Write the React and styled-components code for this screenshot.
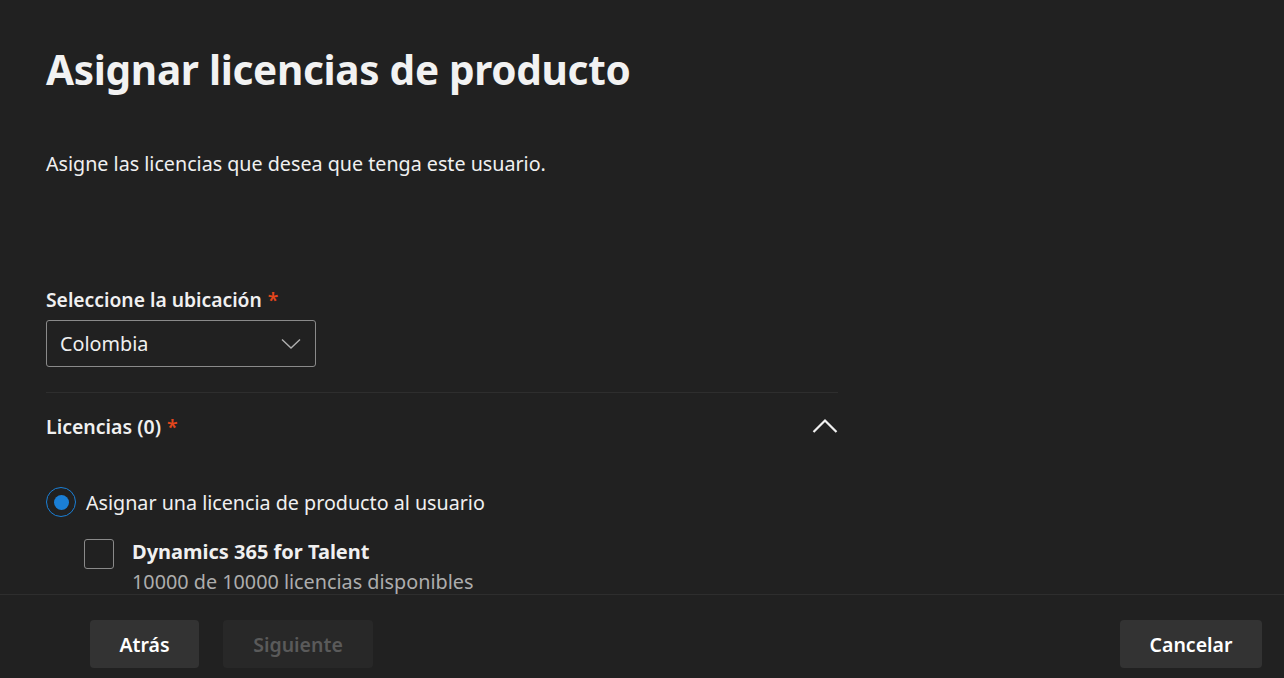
import React, { useState } from "react";
import styled, { createGlobalStyle } from "styled-components";

const GlobalStyle = createGlobalStyle`
  html, body {
    margin: 0;
    padding: 0;
    background: #212121;
  }
  body {
    font-family: "Noto Sans", "Open Sans", sans-serif;
    color: #f0f0f0;
  }
`

const Page = styled.div`
  height: 100vh;
  display: flex;
  flex-direction: column;
  overflow: hidden;
`
const Content = styled.div`
  flex: 1;
  overflow: hidden;
  padding: 42px 46px 0 46px;
`
const Title = styled.h1`
  margin: 0;
  font-size: 40.5px;
  line-height: 56px;
  font-weight: 700;
  color: #f2f2f2;
  letter-spacing: -0.3px;
`
const Description = styled.p`
  margin: 52px 0 0 0;
  font-size: 19.7px;
  line-height: 28px;
  color: #f0f0f0;
`
const Label = styled.div`
  margin-top: 108px;
  font-size: 19.3px;
  line-height: 28px;
  font-weight: 600;
  color: #f0f0f0;
`
const Required = styled.span`
  color: #e3461c;
  margin-left: 6px;
  font-weight: 600;
`
const Select = styled.div`
  margin-top: 6px;
  width: 270px;
  height: 47px;
  box-sizing: border-box;
  border: 1px solid #8a8a8a;
  border-radius: 3px;
  display: flex;
  align-items: center;
  justify-content: space-between;
  padding: 0 14px 0 13px;
  font-size: 19.8px;
  color: #f0f0f0;
`
const Divider = styled.div`
  margin-top: 25px;
  width: 792px;
  height: 1px;
  background: #2e2e2e;
`
const SectionHeader = styled.div`
  width: 792px;
  height: 66px;
  display: flex;
  align-items: center;
  justify-content: space-between;
`
const SectionTitle = styled.div`
  font-size: 19.5px;
  font-weight: 600;
  color: #f0f0f0;
`
const ChevronButton = styled.div`
  display: flex;
  align-items: center;
  cursor: pointer;
`
const RadioRow = styled.label`
  margin-top: 28px;
  display: flex;
  align-items: center;
  gap: 10px;
  font-size: 19.7px;
  color: #f0f0f0;
  cursor: pointer;
`
const RadioCircle = styled.span`
  width: 30px;
  height: 30px;
  box-sizing: border-box;
  border-radius: 50%;
  border: 1.5px solid ${p => (p.checked ? "#1a7fd6" : "#8a8a8a")};
  display: flex;
  align-items: center;
  justify-content: center;
  &::after {
    content: "";
    width: 15px;
    height: 15px;
    border-radius: 50%;
    background: ${p => (p.checked ? "#1a7fd6" : "transparent")};
  }
`
const LicenseRow = styled.div`
  margin-top: 20px;
  margin-left: 38px;
  display: flex;
  gap: 18px;
`
const CheckBox = styled.span`
  width: 30px;
  height: 30px;
  box-sizing: border-box;
  border: 1px solid #8a8a8a;
  border-radius: 3px;
  flex-shrink: 0;
  margin-top: 2px;
`
const LicenseText = styled.div`
  display: flex;
  flex-direction: column;
`
const LicenseName = styled.div`
  font-size: 20px;
  line-height: 30px;
  font-weight: 700;
  color: #f0f0f0;
`
const LicenseCount = styled.div`
  font-size: 19.8px;
  line-height: 30px;
  color: #adadad;
`
const Footer = styled.div`
  height: 84px;
  box-sizing: border-box;
  border-top: 1px solid #2e2e2e;
  display: flex;
  align-items: flex-start;
  padding: 25px 22px 0 90px;
  gap: 24px;
`
const Button = styled.button`
  height: 48px;
  min-width: ${p => p.width}px;
  border: none;
  border-radius: 4px;
  background: ${p => (p.disabled ? "#282828" : "#333333")};
  color: ${p => (p.disabled ? "#5a5a5a" : "#ffffff")};
  font-family: inherit;
  font-size: 19.5px;
  font-weight: 600;
  padding: 0 20px;
  cursor: ${p => (p.disabled ? "default" : "pointer")};
  margin-left: ${p => (p.push ? "auto" : "0")};
`

const ChevronDown = () => (
  <svg width="20" height="12" viewBox="0 0 20 12">
    <path d="M1 1.5 L10 10 L19 1.5" fill="none" stroke="#b0b0b0" strokeWidth="1.4" />
  </svg>
)

const ChevronUp = () => (
  <svg width="26" height="16" viewBox="0 0 26 16">
    <path d="M1.5 14 L13 2.5 L24.5 14" fill="none" stroke="#f0f0f0" strokeWidth="2.2" />
  </svg>
)

const App = () => {
  const [checked, setChecked] = useState(true);

  return (
    <Page>
      <GlobalStyle />
      <Content>
        <Title>Asignar licencias de producto</Title>
        <Description>Asigne las licencias que desea que tenga este usuario.</Description>
        <Label>
          Seleccione la ubicación<Required>*</Required>
        </Label>
        <Select>
          <span>Colombia</span>
          <ChevronDown />
        </Select>
        <Divider />
        <SectionHeader>
          <SectionTitle>
            Licencias (0)<Required>*</Required>
          </SectionTitle>
          <ChevronButton>
            <ChevronUp />
          </ChevronButton>
        </SectionHeader>
        <RadioRow onClick={() => setChecked(true)}>
          <RadioCircle checked={checked} />
          Asignar una licencia de producto al usuario
        </RadioRow>
        <LicenseRow>
          <CheckBox />
          <LicenseText>
            <LicenseName>Dynamics 365 for Talent</LicenseName>
            <LicenseCount>10000 de 10000 licencias disponibles</LicenseCount>
          </LicenseText>
        </LicenseRow>
      </Content>
      <Footer>
        <Button width={109}>Atrás</Button>
        <Button width={150} disabled>Siguiente</Button>
        <Button width={142} push>Cancelar</Button>
      </Footer>
    </Page>
  );
};

export default App;
